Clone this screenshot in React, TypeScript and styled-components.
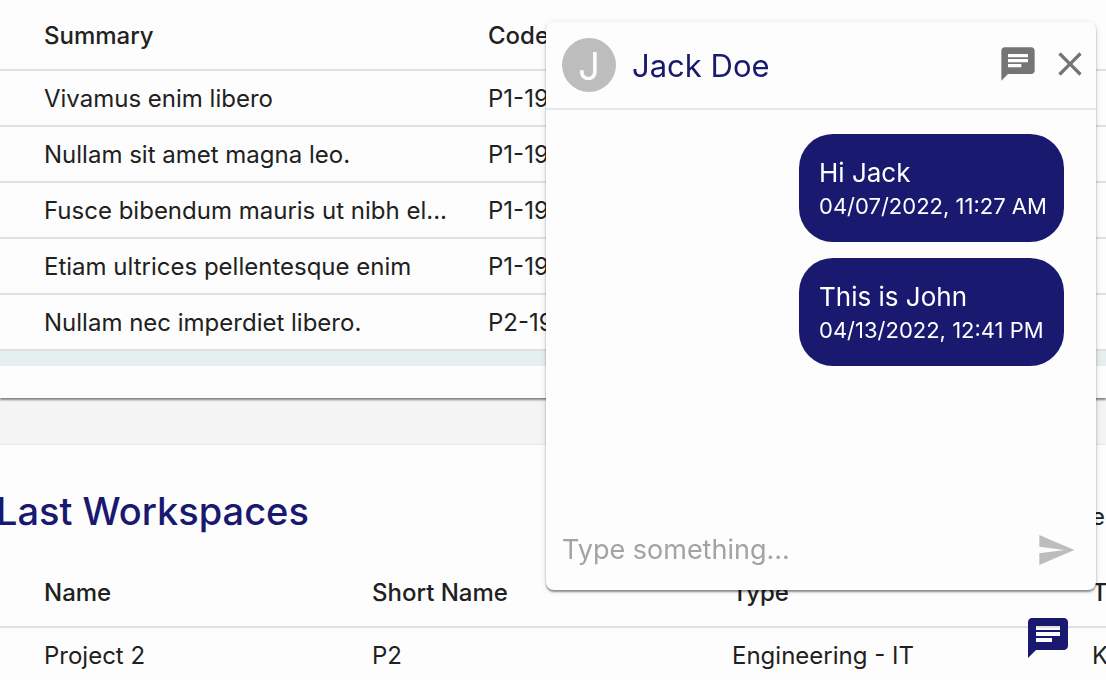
import React from "react";
import styled, { createGlobalStyle } from "styled-components";
import { MdChat, MdClose, MdSend } from "react-icons/md";

const navy = "#191970";
const surface = "#fdfdfd";

const GlobalStyle = createGlobalStyle`
  *, *::before, *::after { box-sizing: border-box; }
  body {
    margin: 0;
    background: #f4f4f4;
    color: #212121;
    font-family: Inter, "Liberation Sans", sans-serif;
    font-size: 24px;
    line-height: 32px;
  }
`;

const Page = styled.main`
  display: flex;
  flex-direction: column;
  gap: 47px;
  height: 100vh;
  overflow: hidden;
`;

const Card = styled.section`
  flex: none;
  background: ${surface};
  box-shadow: 0 2px 2px rgba(0, 0, 0, 0.45), 0 0 2px rgba(0, 0, 0, 0.12);
`;

const CardHeader = styled.header`
  display: flex;
  align-items: center;
  justify-content: space-between;
  height: 112px;
  padding-top: 20px;
`;

const CardTitle = styled.h2`
  margin: 0 0 0 -4px;
  color: ${navy};
  font-size: 38px;
  line-height: 48px;
  font-weight: 500;
`;

const CardLink = styled.a`
  padding: 12px 0 0;
  margin-right: 1px;
  color: inherit;
  text-decoration: none;
`;

const CardFooter = styled.div`
  height: 47px;
  border-top: 15px solid #e4efee;
`;

const Table = styled.table`
  width: 100%;
  table-layout: fixed;
  border-collapse: separate;
  border-spacing: 0;
  text-align: left;
`;

const Column = styled.col<{ $width?: number }>`
  width: ${({ $width }) => ($width ? `${$width}px` : "auto")};
`;

const HeadCell = styled.th`
  height: 71px;
  padding: 2px 0 0 44px;
  border-bottom: 2px solid #e0e0e0;
  font-weight: 500;
  white-space: nowrap;
`;

const Cell = styled.td`
  height: 56px;
  padding: 2px 0 0 44px;
  border-bottom: 2px solid #e0e0e0;
  white-space: nowrap;
`;

const ChatPanel = styled.aside`
  position: fixed;
  right: 10px;
  bottom: 90px;
  display: flex;
  flex-direction: column;
  width: 550px;
  height: 568px;
  border-radius: 8px;
  background: ${surface};
  box-shadow: 0 2px 2px rgba(0, 0, 0, 0.4), 0 1px 6px rgba(0, 0, 0, 0.12);
`;

const ChatHeader = styled.header`
  display: flex;
  align-items: center;
  gap: 16px;
  height: 88px;
  padding: 0 6px 0 16px;
  border-bottom: 2px solid #e6e6ee;
`;

const Avatar = styled.span`
  display: flex;
  align-items: center;
  justify-content: center;
  width: 54px;
  height: 54px;
  padding-top: 2px;
  border-radius: 50%;
  background: #bdbdbd;
  color: ${surface};
  font-size: 38px;
`;

const ChatTitle = styled.h2`
  flex: 1;
  margin: 0;
  padding-top: 2px;
  color: ${navy};
  font-size: 31px;
  line-height: 40px;
  font-weight: 400;
`;

const HeaderActions = styled.div`
  display: flex;
  gap: 12px;
  padding-bottom: 2px;
`;

const IconButton = styled.button<{ $color: string }>`
  display: flex;
  padding: 0;
  border: 0;
  background: none;
  color: ${({ $color }) => $color};
  cursor: pointer;
`;

const Messages = styled.div`
  flex: 1;
  display: flex;
  flex-direction: column;
  align-items: flex-end;
  gap: 16px;
  padding: 24px 32px;
`;

const Bubble = styled.article`
  display: flex;
  flex-direction: column;
  width: 265px;
  padding: 22px 16px 20px 20px;
  border-radius: 34px;
  background: ${navy};
  color: #fff;
  white-space: nowrap;
`;

const MessageText = styled.p`
  margin: 0;
  font-size: 26px;
  line-height: 34px;
`;

const MessageTime = styled.time`
  font-size: 22px;
  line-height: 32px;
`;

const Composer = styled.form`
  display: flex;
  align-items: center;
  height: 80px;
  padding: 0 20px 0 16px;
`;

const MessageInput = styled.input`
  flex: 1;
  min-width: 0;
  padding: 0;
  border: 0;
  outline: 0;
  background: none;
  color: #212121;
  font-family: inherit;
  font-size: 27px;
  line-height: 36px;

  &::placeholder {
    color: #a3a3a3;
    opacity: 1;
  }
`;

const ChatToggle = styled(IconButton)`
  position: fixed;
  right: 34px;
  bottom: 18px;
`;

const tasks = [
  ["Vivamus enim libero", "P1-19"],
  ["Nullam sit amet magna leo.", "P1-19"],
  ["Fusce bibendum mauris ut nibh el...", "P1-19"],
  ["Etiam ultrices pellentesque enim", "P1-19"],
  ["Nullam nec imperdiet libero.", "P2-19"],
];

const workspaces = [["Project 2", "P2", "Engineering - IT", "K"]];

const messages = [
  { text: "Hi Jack", time: "04/07/2022, 11:27 AM" },
  { text: "This is John", time: "04/13/2022, 12:41 PM" },
];

type DataTableProps = {
  columns: string[];
  widths: number[];
  rows: string[][];
};

function DataTable({ columns, widths, rows }: DataTableProps) {
  return (
    <Table>
      <colgroup>
        {columns.map((name, i) => (
          <Column key={name} $width={widths[i]} />
        ))}
      </colgroup>
      <thead>
        <tr>
          {columns.map((name) => (
            <HeadCell key={name} scope="col">{name}</HeadCell>
          ))}
        </tr>
      </thead>
      <tbody>
        {rows.map((row) => (
          <tr key={row[0]}>
            {row.map((value, i) => (
              <Cell key={i}>{value}</Cell>
            ))}
          </tr>
        ))}
      </tbody>
    </Table>
  );
}

export default function App() {
  return (
    <>
      <GlobalStyle />
      <Page>
        <Card>
          <DataTable columns={["Summary", "Code"]} widths={[444]} rows={tasks} />
          <CardFooter />
        </Card>
        <Card>
          <CardHeader>
            <CardTitle>Last Workspaces</CardTitle>
            <CardLink href="#">e</CardLink>
          </CardHeader>
          <DataTable
            columns={["Name", "Short Name", "Type", "T"]}
            widths={[328, 360, 360]}
            rows={workspaces}
          />
        </Card>
      </Page>

      <ChatPanel aria-label="Chat">
        <ChatHeader>
          <Avatar>J</Avatar>
          <ChatTitle>Jack Doe</ChatTitle>
          <HeaderActions>
            <IconButton type="button" $color="#757575" aria-label="Conversations">
              <MdChat size={40} />
            </IconButton>
            <IconButton type="button" $color="#757575" aria-label="Close">
              <MdClose size={40} />
            </IconButton>
          </HeaderActions>
        </ChatHeader>
        <Messages>
          {messages.map((message) => (
            <Bubble key={message.time}>
              <MessageText>{message.text}</MessageText>
              <MessageTime>{message.time}</MessageTime>
            </Bubble>
          ))}
        </Messages>
        <Composer>
          <MessageInput type="text" placeholder="Type something..." aria-label="Message" />
          <IconButton type="submit" $color="#bdbdbd" aria-label="Send">
            <MdSend size={40} />
          </IconButton>
        </Composer>
      </ChatPanel>

      <ChatToggle type="button" $color={navy} aria-label="Toggle chat">
        <MdChat size={48} />
      </ChatToggle>
    </>
  );
}
